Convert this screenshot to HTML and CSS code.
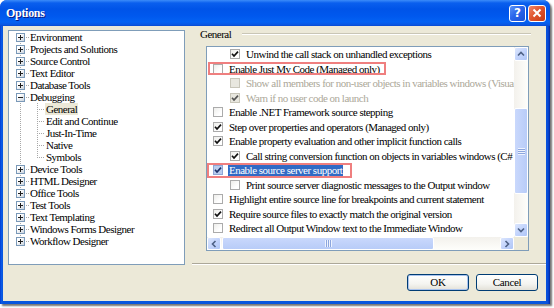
FILE: index.html
```html
<!DOCTYPE html>
<html>
<head>
<meta charset="utf-8">
<link rel="stylesheet" href="styles.css">
</head>
<body>
<div class="win">
  <div class="titlebar">
    <span class="title">Options</span>
    <div class="tbtns">
      <span class="tbtn help">?</span>
      <span class="tbtn close"><svg width="10" height="10" viewBox="0 0 10 10"><path d="M1.5 1.5 L8.5 8.5 M8.5 1.5 L1.5 8.5" stroke="#fff" stroke-width="2" fill="none"/></svg></span>
    </div>
  </div>
  <div class="client">
    <ul class="tree">
      <li class="node"><span class="exp plus"></span><span class="lbl">Environment</span></li>
      <li class="node"><span class="exp plus"></span><span class="lbl">Projects and Solutions</span></li>
      <li class="node"><span class="exp plus"></span><span class="lbl">Source Control</span></li>
      <li class="node"><span class="exp plus"></span><span class="lbl">Text Editor</span></li>
      <li class="node"><span class="exp plus"></span><span class="lbl">Database Tools</span></li>
      <li class="node"><span class="exp minus"></span><span class="lbl">Debugging</span></li>
      <li class="child"><span class="lbl sel">General</span></li>
      <li class="child"><span class="lbl">Edit and Continue</span></li>
      <li class="child"><span class="lbl">Just-In-Time</span></li>
      <li class="child"><span class="lbl">Native</span></li>
      <li class="child"><span class="lbl">Symbols</span></li>
      <li class="node"><span class="exp plus"></span><span class="lbl">Device Tools</span></li>
      <li class="node"><span class="exp plus"></span><span class="lbl">HTML Designer</span></li>
      <li class="node"><span class="exp plus"></span><span class="lbl">Office Tools</span></li>
      <li class="node"><span class="exp plus"></span><span class="lbl">Test Tools</span></li>
      <li class="node"><span class="exp plus"></span><span class="lbl">Text Templating</span></li>
      <li class="node"><span class="exp plus"></span><span class="lbl">Windows Forms Designer</span></li>
      <li class="node"><span class="exp plus"></span><span class="lbl">Workflow Designer</span></li>
    </ul>
    <div class="right">
      <div class="ghead"><span class="gtitle">General</span><span class="etch"></span></div>
      <div class="list">
        <div class="items">
          <div class="row l1"><span class="cb on"><svg width="8" height="8" viewBox="0 0 8 8"><path d="M1 3.8 L3 6 L7 1.6"/></svg></span><span class="txt">Unwind the call stack on unhandled exceptions</span></div>
          <div class="row"><span class="cb"></span><span class="txt">Enable Just My Code (Managed only)</span><span class="mark mark-jmc"></span></div>
          <div class="row l1 dis"><span class="cb"></span><span class="txt">Show all members for non-user objects in variables windows (Visual Basic only)</span></div>
          <div class="row l1 dis"><span class="cb on"><svg width="8" height="8" viewBox="0 0 8 8"><path d="M1 3.8 L3 6 L7 1.6"/></svg></span><span class="txt">Warn if no user code on launch</span></div>
          <div class="row"><span class="cb"></span><span class="txt">Enable .NET Framework source stepping</span></div>
          <div class="row"><span class="cb on"><svg width="8" height="8" viewBox="0 0 8 8"><path d="M1 3.8 L3 6 L7 1.6"/></svg></span><span class="txt">Step over properties and operators (Managed only)</span></div>
          <div class="row"><span class="cb on"><svg width="8" height="8" viewBox="0 0 8 8"><path d="M1 3.8 L3 6 L7 1.6"/></svg></span><span class="txt">Enable property evaluation and other implicit function calls</span></div>
          <div class="row l1"><span class="cb on"><svg width="8" height="8" viewBox="0 0 8 8"><path d="M1 3.8 L3 6 L7 1.6"/></svg></span><span class="txt">Call string conversion function on objects in variables windows (C# and JavaScript only)</span></div>
          <div class="row sel"><span class="cb on"><svg width="8" height="8" viewBox="0 0 8 8"><path d="M1 3.8 L3 6 L7 1.6"/></svg></span><span class="txt">Enable source server support</span><span class="mark mark-sss"></span></div>
          <div class="row l1"><span class="cb"></span><span class="txt">Print source server diagnostic messages to the Output window</span></div>
          <div class="row"><span class="cb"></span><span class="txt">Highlight entire source line for breakpoints and current statement</span></div>
          <div class="row"><span class="cb on"><svg width="8" height="8" viewBox="0 0 8 8"><path d="M1 3.8 L3 6 L7 1.6"/></svg></span><span class="txt">Require source files to exactly match the original version</span></div>
          <div class="row"><span class="cb"></span><span class="txt">Redirect all Output Window text to the Immediate Window</span></div>
        </div>
        <div class="vscroll">
          <span class="sbtn"><svg width="8" height="8" viewBox="0 0 8 8"><path d="M1 5.5 L4 2.5 L7 5.5"/></svg></span>
          <div class="vtrack"><div class="vthumb"><span class="grip"></span></div></div>
          <span class="sbtn"><svg width="8" height="8" viewBox="0 0 8 8"><path d="M1 2.5 L4 5.5 L7 2.5"/></svg></span>
        </div>
        <div class="hscroll">
          <span class="sbtn"><svg width="8" height="8" viewBox="0 0 8 8"><path d="M5.5 1 L2.5 4 L5.5 7"/></svg></span>
          <div class="htrack"><div class="hthumb"><span class="grip"></span></div></div>
          <span class="sbtn"><svg width="8" height="8" viewBox="0 0 8 8"><path d="M2.5 1 L5.5 4 L2.5 7"/></svg></span>
        </div>
        <div class="corner"></div>
      </div>
      <div class="sep"></div>
      <div class="buttons">
        <button class="btn def">OK</button>
        <button class="btn">Cancel</button>
      </div>
    </div>
  </div>
</div>
</body>
</html>
```
FILE: styles.css
```css
html, body {
  margin: 0;
  padding: 0;
}
body {
  width: 554px;
  height: 308px;
  background: #fff;
  overflow: hidden;
  font-family: "Liberation Serif", serif;
  color: #000;
}
.win {
  width: 550px;
  height: 304px;
  background: linear-gradient(to right, #0030C8 0, #0A5BE8 1px, #0855DD 3px, #0855DD 546px, #0A4AD8 548px, #00269E 550px);
  border-radius: 7px 7px 0 0;
  box-shadow: 2px 2px 2px rgba(0, 0, 0, 0.55);
  display: flex;
  flex-direction: column;
}
.titlebar {
  height: 26px;
  flex: none;
  border-radius: 7px 7px 0 0;
  background: linear-gradient(to bottom, #3C8CF9 0, #0A5FEE 3px, #0054E8 9px, #0058EE 16px, #0462F3 22px, #0A55E0 25px, #0848CF 26px);
  display: flex;
  align-items: center;
  padding: 0 4px 0 6px;
  box-sizing: border-box;
}
.title {
  flex: 1;
  color: #fff;
  font-weight: bold;
  font-size: 12px;
  letter-spacing: -0.3px;
  text-shadow: 1px 1px #0A1883;
}
.tbtns {
  display: flex;
  gap: 2px;
}
.tbtn {
  width: 17px;
  height: 17px;
  box-sizing: border-box;
  border: 1px solid #fff;
  border-radius: 3px;
  display: flex;
  align-items: center;
  justify-content: center;
}
.help {
  background: linear-gradient(135deg, #5B93F7 0, #2A66EC 45%, #1A4FD6 100%);
  color: #fff;
  font-family: "DejaVu Sans", sans-serif;
  font-weight: bold;
  font-size: 12px;
  line-height: 1;
}
.close {
  width: 18px;
  background: linear-gradient(135deg, #F0876A 0, #E0562F 45%, #C63A14 100%);
}
.client {
  flex: 1;
  margin: 0 4px 3px 3px;
  background: #ECE9D8;
  display: flex;
  align-items: flex-start;
}
/* Tree */
.tree {
  margin: 4px 0 0 5px;
  padding: 0;
  width: 177px;
  height: 235px;
  box-sizing: border-box;
  border: 1px solid #7F9DB9;
  list-style: none;
  background-color: #fff;
  background-image:
    repeating-linear-gradient(to bottom, #A8A8A8 0 1px, transparent 1px 2px),
    repeating-linear-gradient(to bottom, #A8A8A8 0 1px, transparent 1px 2px);
  background-size: 1px 204px, 1px 54px;
  background-position: 11px 6px, 28px 72px;
  background-repeat: no-repeat;
  font-size: 11px;
  letter-spacing: -0.5px;
}
.tree li {
  height: 12px;
  display: flex;
  align-items: center;
  white-space: nowrap;
  background-repeat: no-repeat;
  background-image: repeating-linear-gradient(to right, #A8A8A8 0 1px, transparent 1px 2px);
}
.tree .node {
  background-size: 9px 1px;
  background-position: 11px 6px;
}
.tree .child {
  background-size: 8px 1px;
  background-position: 28px 6px;
}
.exp {
  flex: none;
  width: 9px;
  height: 9px;
  box-sizing: border-box;
  margin-left: 7px;
  border: 1px solid #7A99B8;
  background-repeat: no-repeat;
}
.exp.plus {
  background-image:
    linear-gradient(#1E1E1E, #1E1E1E),
    linear-gradient(#1E1E1E, #1E1E1E),
    linear-gradient(135deg, #fff 30%, #C9D2DC);
  background-size: 5px 1px, 1px 5px, 100% 100%;
  background-position: 1px 3px, 3px 1px, 0 0;
}
.exp.minus {
  background-image:
    linear-gradient(#1E1E1E, #1E1E1E),
    linear-gradient(135deg, #fff 30%, #C9D2DC);
  background-size: 5px 1px, 100% 100%;
  background-position: 1px 3px, 0 0;
}
.lbl {
  line-height: 12px;
  padding: 0 1px;
}
.node .lbl {
  margin-left: 4px;
}
.child .lbl {
  margin-left: 36px;
}
.lbl.sel {
  background: #ECE9D8;
}
/* Right panel */
.right {
  flex: 1;
  align-self: stretch;
  display: flex;
  flex-direction: column;
  margin-left: 7px;
}
.ghead {
  height: 12px;
  margin: 2px 15px 0 8px;
  display: flex;
  align-items: center;
  font-size: 11px;
  letter-spacing: -0.5px;
}
.etch {
  flex: 1;
  margin-left: 11px;
  height: 0;
  border-top: 1px solid #C9C6B6;
  border-bottom: 1px solid #fff;
}
.list {
  margin: 6px 0 0 14px;
  width: 323px;
  height: 205px;
  box-sizing: border-box;
  border: 1px solid #7F9DB9;
  background: #fff;
  display: grid;
  grid-template-columns: 1fr 14px;
  grid-template-rows: 1fr 13px;
}
.items {
  overflow: hidden;
  font-size: 11px;
  letter-spacing: -0.5px;
}
.row {
  height: 14.5px;
  display: flex;
  align-items: center;
  padding-left: 6px;
  white-space: nowrap;
  position: relative;
}
.row.l1 {
  padding-left: 23px;
}
.cb {
  flex: none;
  width: 10px;
  height: 10px;
  box-sizing: border-box;
  border: 1px solid #ABABAB;
  background: linear-gradient(135deg, #EDEDEA 0, #fff 70%);
  display: flex;
  align-items: center;
  justify-content: center;
}
.cb svg path {
  fill: none;
  stroke: #111;
  stroke-width: 1.7;
}
.txt {
  margin-left: 5px;
  padding: 0 1px;
  line-height: 12px;
}
.row.dis .txt {
  color: #ACA899;
}
.row.dis .cb {
  background: #E8E7DF;
  border-color: #C8C6BA;
}
.row.dis .cb svg path {
  stroke: #555;
}
.row.sel .txt {
  background: #316AC5;
  color: #fff;
}
.row.sel .cb {
  background: #B9CCEE;
  border-color: #8EA6D6;
}
.row.sel .cb svg path {
  stroke: #1B2F66;
}
.mark {
  position: absolute;
  box-sizing: border-box;
  border: 2px solid #EF7F7F;
}
.mark-jmc {
  top: 0;
  left: 1px;
  width: 178px;
  height: 13px;
}
.mark-sss {
  top: 0;
  left: 0;
  width: 145px;
  height: 15px;
}
/* Scrollbars */
.vscroll {
  display: flex;
  flex-direction: column;
  background: linear-gradient(to right, #F3F1EC, #FEFEFB);
}
.hscroll {
  display: flex;
  background: linear-gradient(to bottom, #F3F1EC, #FEFEFB);
}
.corner {
  background: #ECE9D8;
}
.sbtn {
  flex: none;
  width: 14px;
  height: 14px;
  box-sizing: border-box;
  border: 1px solid #fff;
  border-radius: 2px;
  background: linear-gradient(135deg, #DCE6FD 0, #C3D4FC 50%, #AFC6F6 100%);
  display: flex;
  align-items: center;
  justify-content: center;
}
.hscroll .sbtn {
  height: 13px;
}
.sbtn svg path {
  fill: none;
  stroke: #4D6185;
  stroke-width: 1.6;
}
.vtrack, .htrack {
  flex: 1;
}
.vthumb {
  margin-top: 47px;
  height: 86px;
  box-sizing: border-box;
  border: 1px solid #fff;
  border-radius: 2px;
  background: linear-gradient(to right, #C9D8FC, #B8CCF8);
  display: flex;
  align-items: center;
  justify-content: center;
}
.hthumb {
  margin-left: 1px;
  width: 212px;
  height: 13px;
  box-sizing: border-box;
  border: 1px solid #fff;
  border-radius: 2px;
  background: linear-gradient(to bottom, #C9D8FC, #B8CCF8);
  display: flex;
  align-items: center;
  justify-content: center;
}
.vthumb .grip {
  width: 7px;
  height: 7px;
  background: repeating-linear-gradient(to bottom, #EEF3FE 0 1px, #8CA6DE 1px 2px);
}
.hthumb .grip {
  width: 7px;
  height: 7px;
  background: repeating-linear-gradient(to right, #EEF3FE 0 1px, #8CA6DE 1px 2px);
}
.sep {
  margin-top: 12px;
  height: 0;
  border-top: 1px solid #ACA899;
  border-bottom: 1px solid #fff;
}
.buttons {
  display: flex;
  justify-content: flex-end;
  gap: 7px;
  margin: 9px 8px 0 0;
}
.btn {
  width: 62px;
  height: 17px;
  box-sizing: border-box;
  border: 1px solid #003C74;
  border-radius: 3px;
  background: linear-gradient(to bottom, #FFFFFF 0, #F4F4F0 60%, #E3E1D8 100%);
  font-family: "Liberation Serif", serif;
  font-size: 11px;
  letter-spacing: -0.3px;
  color: #000;
  padding: 0;
  line-height: 1;
}
.btn.def {
  box-shadow: inset 0 0 0 1px #A9C3EE;
}
```
